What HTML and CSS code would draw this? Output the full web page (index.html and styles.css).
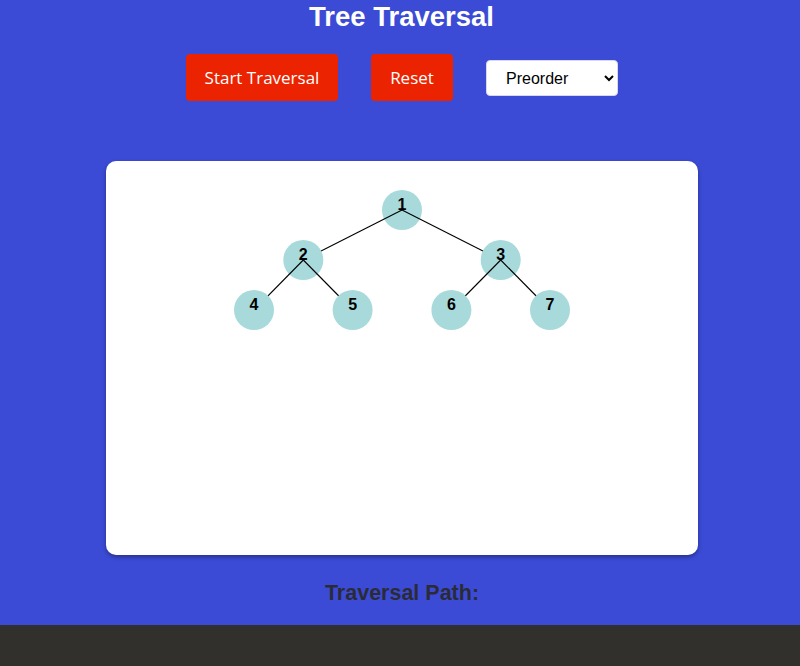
FILE: index.html
```html
<!DOCTYPE html>
<html lang="en">
<head>
<meta charset="utf-8">
<title>Tree Traversal</title>
<link rel="stylesheet" href="styles.css">
</head>
<body>
<main class="page">
  <h1 class="title">Tree Traversal</h1>
  <div class="controls">
    <button class="btn btn-start">Start Traversal</button>
    <button class="btn btn-reset">Reset</button>
    <select class="order">
      <option>Preorder</option>
      <option>Inorder</option>
      <option>Postorder</option>
    </select>
  </div>
  <div class="card">
    <svg class="tree" width="592" height="394" viewBox="0 0 592 394">
      <g class="node"><circle cx="296" cy="49" r="20"/><text x="296" y="49">1</text></g>
      <line x1="296" y1="49" x2="197.3" y2="99"/>
      <g class="node"><circle cx="197.3" cy="99" r="20"/><text x="197.3" y="99">2</text></g>
      <line x1="197.3" y1="99" x2="148" y2="149"/>
      <g class="node"><circle cx="148" cy="149" r="20"/><text x="148" y="149">4</text></g>
      <line x1="197.3" y1="99" x2="246.6" y2="149"/>
      <g class="node"><circle cx="246.6" cy="149" r="20"/><text x="246.6" y="149">5</text></g>
      <line x1="296" y1="49" x2="394.7" y2="99"/>
      <g class="node"><circle cx="394.7" cy="99" r="20"/><text x="394.7" y="99">3</text></g>
      <line x1="394.7" y1="99" x2="345.4" y2="149"/>
      <g class="node"><circle cx="345.4" cy="149" r="20"/><text x="345.4" y="149">6</text></g>
      <line x1="394.7" y1="99" x2="444" y2="149"/>
      <g class="node"><circle cx="444" cy="149" r="20"/><text x="444" y="149">7</text></g>
    </svg>
  </div>
  <h2 class="path-title">Traversal Path:</h2>
</main>
<footer class="footer"></footer>
</body>
</html>
```

FILE: styles.css
```css
html, body {
  margin: 0;
  padding: 0;
}
body {
  background: #3b4bd5;
  font-family: "Liberation Sans", Arial, sans-serif;
  height: 666px;
  display: flex;
  flex-direction: column;
}
.page {
  height: 625px;
  padding-left: 4px;
  display: flex;
  flex-direction: column;
  align-items: center;
}
.title {
  margin: 1px 0 0 0;
  font-size: 27.5px;
  line-height: 32px;
  font-weight: bold;
  color: #ffffff;
  padding-right: 1px;
}
.controls {
  margin-top: 21px;
  display: flex;
  align-items: center;
  gap: 33px;
}
.btn {
  background: #ec2300;
  color: #ffffff;
  border: none;
  border-radius: 4px;
  height: 47px;
  font-family: "Open Sans", sans-serif;
  font-size: 17px;
  padding: 0;
}
.btn-start { width: 152px; }
.btn-reset { width: 82px; }
.order {
  width: 132px;
  height: 36px;
  border: 1px solid #d8d8e8;
  border-radius: 4px;
  background: #ffffff;
  font-family: "Liberation Sans", Arial, sans-serif;
  font-size: 16px;
  color: #000;
  padding: 0 6px 0 15px;
  margin-top: 1px;
}
.card {
  margin-top: 60px;
  width: 592px;
  height: 394px;
  background: #ffffff;
  border-radius: 10px;
  box-shadow: 0 2px 4px rgba(0, 0, 0, 0.35);
  overflow: hidden;
}
.tree {
  display: block;
}
.tree circle {
  fill: #a8dadc;
}
.tree line {
  stroke: #000;
  stroke-width: 1.1;
}
.tree text {
  font-family: "Liberation Sans", Arial, sans-serif;
  font-weight: bold;
  font-size: 16px;
  text-anchor: middle;
  fill: #000;
}
.path-title {
  margin: 25px 0 0 0;
  font-size: 21.5px;
  line-height: 26px;
  color: #2b2b38;
}
.footer {
  flex: 1;
  background: #32302c;
}
```
